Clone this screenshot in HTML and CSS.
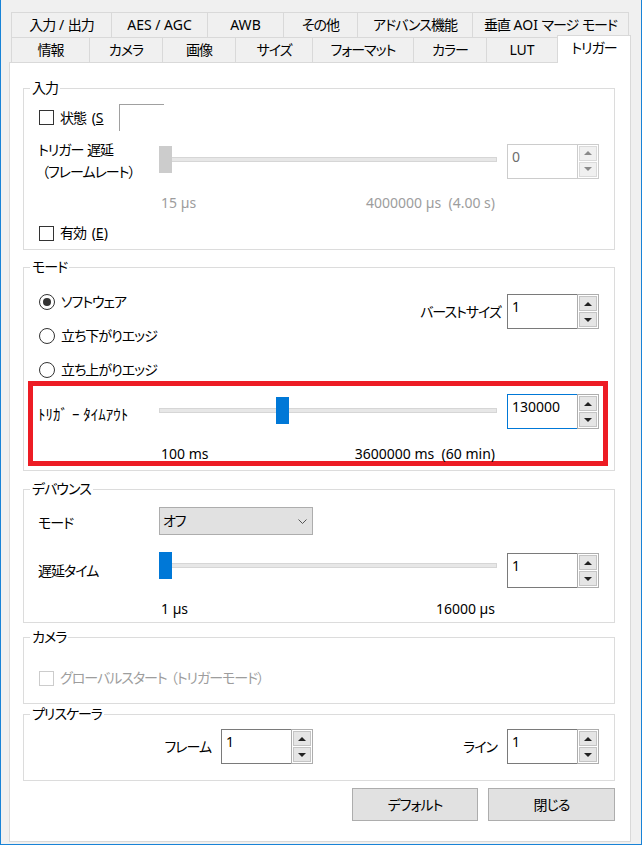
FILE: index.html
```html
<!DOCTYPE html>
<html lang="ja">
<head>
<meta charset="utf-8">
<title>トリガー</title>
<link rel="stylesheet" href="styles.css">
</head>
<body>
<div class="window">
  <div class="tabs">
    <div class="tab-row row1">
      <div class="tab t101">入力<span class="latin"> / </span>出力</div>
      <div class="tab t97 latin">AES / AGC</div>
      <div class="tab t77 latin">AWB</div>
      <div class="tab t75">その他</div>
      <div class="tab t116">アドバンス機能</div>
      <div class="tab t157">垂直<span class="latin"> AOI </span>マージ<span class="latin"> </span>モード</div>
    </div>
    <div class="tab-row row2">
      <div class="tab t79">情報</div>
      <div class="tab t74">カメラ</div>
      <div class="tab t74">画像</div>
      <div class="tab t78">サイズ</div>
      <div class="tab t102">フォーマット</div>
      <div class="tab t74">カラー</div>
      <div class="tab t72 latin">LUT</div>
      <div class="tab t74 active">トリガー</div>
    </div>
  </div>

  <div class="page">
    <!-- 入力 -->
    <div class="group g-input">
      <div class="legend">入力</div>
      <div class="check r-state">
        <span class="cb"></span><span>状態<span class="latin wide"> (<u>S</u></span></span><span class="clip-box"></span>
      </div>
      <div class="slider-row r-delay">
        <div class="slabel">トリガー<span class="latin"> </span>遅延<br><span class="indent">（フレームレート）</span></div>
        <div class="slider s-up"><div class="track"></div><div class="thumb gray" style="left:0px"></div></div>
        <div class="num disabled">
          <div class="num-val">0</div>
          <div class="spin"><span class="sb"><i class="up"></i></span><span class="sb"><i class="dn"></i></span></div>
        </div>
      </div>
      <div class="scale dim r-scale"><span>15 µs</span><span>4000000 µs&nbsp;&nbsp;(4.00 s)</span></div>
      <div class="check r-enable"><span class="cb"></span><span>有効<span class="latin wide"> (<u>E</u>)</span></span></div>
    </div>

    <!-- モード -->
    <div class="group g-mode">
      <div class="legend">モード</div>
      <div class="mode-top">
        <div class="radios">
          <div class="check"><span class="radio on"></span><span>ソフトウェア</span></div>
          <div class="check"><span class="radio"></span><span>立ち下がりエッジ</span></div>
          <div class="check"><span class="radio"></span><span>立ち上がりエッジ</span></div>
        </div>
        <div class="burst">
          <span>バーストサイズ</span>
          <div class="num">
            <div class="num-val">1</div>
            <div class="spin"><span class="sb"><i class="up"></i></span><span class="sb"><i class="dn"></i></span></div>
          </div>
        </div>
      </div>
      <div class="highlight">
        <div class="slider-row r-timeout">
          <div class="slabel half">ﾄﾘｶﾞ ｰ ﾀｲﾑｱｳﾄ</div>
          <div class="slider s-up"><div class="track"></div><div class="thumb" style="left:117px"></div></div>
          <div class="num focus">
            <div class="num-val">130000</div>
            <div class="spin"><span class="sb"><i class="up"></i></span><span class="sb"><i class="dn"></i></span></div>
          </div>
        </div>
        <div class="scale r-scale-red"><span>100 ms</span><span>3600000 ms&nbsp;&nbsp;(60 min)</span></div>
      </div>
    </div>

    <!-- デバウンス -->
    <div class="group g-deb">
      <div class="legend">デバウンス</div>
      <div class="slider-row r-debmode">
        <div class="slabel">モード</div>
        <div class="combo"><span>オフ</span>
          <svg width="9" height="5" viewBox="0 0 9 5"><polyline points="0.5,0.5 4.5,4.5 8.5,0.5" fill="none" stroke="#555" stroke-width="1"/></svg>
        </div>
      </div>
      <div class="slider-row r-debdelay">
        <div class="slabel">遅延タイム</div>
        <div class="slider s-up2"><div class="track"></div><div class="thumb" style="left:0px"></div></div>
        <div class="num">
          <div class="num-val">1</div>
          <div class="spin"><span class="sb"><i class="up"></i></span><span class="sb"><i class="dn"></i></span></div>
        </div>
      </div>
      <div class="scale r-scale"><span>1 µs</span><span>16000 µs</span></div>
    </div>

    <!-- カメラ -->
    <div class="group g-cam">
      <div class="legend">カメラ</div>
      <div class="check r-global dim"><span class="cb dis"></span><span>グローバルスタート<span class="pspace"></span>（トリガーモード）</span></div>
    </div>

    <!-- プリスケーラ -->
    <div class="group g-pre">
      <div class="legend">プリスケーラ</div>
      <div class="pre-row">
        <span class="plabel">フレーム</span>
        <div class="num">
          <div class="num-val">1</div>
          <div class="spin"><span class="sb"><i class="up"></i></span><span class="sb"><i class="dn"></i></span></div>
        </div>
        <span class="plabel">ライン</span>
        <div class="num">
          <div class="num-val">1</div>
          <div class="spin"><span class="sb"><i class="up"></i></span><span class="sb"><i class="dn"></i></span></div>
        </div>
      </div>
    </div>

    <div class="buttons">
      <button class="btn b1">デフォルト</button>
      <button class="btn b2">閉じる</button>
    </div>
  </div>
</div>
</body>
</html>
```

FILE: styles.css
```css
html, body {
  margin: 0;
  padding: 0;
}
body {
  width: 642px;
  height: 845px;
  overflow: hidden;
  font-family: "Noto Sans", "Noto Sans CJK JP", sans-serif;
  font-size: 14px;
  line-height: 20px;
  letter-spacing: -1px;
  color: #000;
  font-feature-settings: "palt";
}
.latin { letter-spacing: 0; word-spacing: 0; }
.latin.wide { word-spacing: 2px; }
.indent { display: inline-block; margin-left: 4px; }
.pspace { display: inline-block; width: 4px; }
.window {
  width: 642px;
  height: 845px;
  box-sizing: border-box;
  border-left: 1px solid #1883d7;
  border-right: 1px solid #1883d7;
  border-bottom: 1px solid #1883d7;
  background: #f0f0f0;
  padding-top: 12px;
}

/* tabs */
.tabs { margin-left: 10px; }
.tab-row { display: flex; height: 25px; }
.row2 { align-items: flex-end; }
.tab {
  box-sizing: border-box;
  height: 25px;
  border: 1px solid #d9d9d9;
  border-bottom: none;
  margin-left: -1px;
  background: #f0f0f0;
  text-align: center;
  line-height: 24px;
  white-space: nowrap;
}
.tab:first-child { margin-left: 0; }
.tab.active {
  height: 28px;
  margin-bottom: -1px;
  position: relative;
  background: #fff;
  line-height: 24px;
}
.t72 { width: 72px; } .t74 { width: 74px; } .t75 { width: 75px; }
.t77 { width: 77px; } .t78 { width: 78px; } .t79 { width: 79px; }
.t97 { width: 97px; } .t101 { width: 101px; } .t102 { width: 102px; }
.t116 { width: 116px; } .t157 { width: 157px; }

/* page */
.page {
  margin-left: 8px;
  width: 622px;
  height: 780px;
  box-sizing: border-box;
  border: 1px solid #d9d9d9;
  background: #fff;
  padding: 25px 15px 0 13px;
}
.group {
  box-sizing: border-box;
  width: 592px;
  border: 1px solid #dcdcdc;
}
.legend {
  width: fit-content;
  margin: -10px 0 0 6px;
  padding: 0 2px;
  background: #fff;
  line-height: 18px;
}
.g-input { height: 162px; }
.g-mode { height: 204px; margin-top: 17px; }
.g-deb { height: 134px; margin-top: 18px; }
.g-cam { height: 67px; margin-top: 14px; }
.g-pre { height: 67px; margin-top: 10px; }

/* check / radio */
.check {
  display: flex;
  align-items: center;
  gap: 6px;
  padding-left: 15px;
  line-height: 20px;
}
.cb {
  width: 15px;
  height: 15px;
  box-sizing: border-box;
  border: 1px solid #333;
  background: #fff;
  flex: none;
}
.cb.dis { border-color: #cccccc; }
.radio {
  width: 16px;
  height: 16px;
  box-sizing: border-box;
  border: 1px solid #333;
  border-radius: 50%;
  display: flex;
  align-items: center;
  justify-content: center;
  flex: none;
}
.radio.on::after {
  content: "";
  width: 8px;
  height: 8px;
  border-radius: 50%;
  background: #333;
}
.dim { color: #9d9d9d; }

.r-state { margin-top: 7px; height: 27px; }
.clip-box {
  align-self: flex-start;
  width: 45px;
  height: 27px;
  box-sizing: border-box;
  border-top: 1px solid #a0a0a0;
  border-left: 1px solid #a0a0a0;
  margin-left: 9px;
}
.r-enable { margin-top: 10px; }

/* slider rows */
.slider-row {
  display: grid;
  grid-template-columns: 121px 338px 102px;
  align-items: center;
  padding-left: 14px;
}
.slider-row .num { justify-self: end; }
.slabel { line-height: 22px; white-space: nowrap; }
.r-delay { margin-top: 8px; }
.slider {
  position: relative;
  height: 27px;
}
.s-up { margin-bottom: 3px; }
.s-up2 { margin-bottom: 10px; }
.track {
  position: absolute;
  left: 0;
  right: 0;
  top: 11px;
  height: 5px;
  box-sizing: border-box;
  background: #e7e7e7;
  border: 1px solid #d6d6d6;
}
.thumb {
  position: absolute;
  top: 0;
  width: 13px;
  height: 27px;
  background: #0078d7;
}
.thumb.gray { background: #cccccc; }

.scale {
  display: flex;
  justify-content: space-between;
  width: 338px;
  box-sizing: border-box;
  margin-left: 135px;
  padding: 0 2px 0 2px;
  line-height: 20px;
  letter-spacing: 0;
}
.r-scale { margin-top: 10px; }

/* numeric up-down */
.num {
  display: flex;
  width: 92px;
  height: 35px;
  box-sizing: border-box;
  letter-spacing: 0;
}
.num-val {
  flex: 1;
  border: 1px solid #7a7a7a;
  border-right: none;
  padding: 1px 4px;
  line-height: 22px;
  background: #fff;
}
.spin {
  width: 22px;
  box-sizing: border-box;
  border: 1px solid #adadad;
  padding: 1px;
  display: flex;
  flex-direction: column;
  gap: 1px;
  background: #fff;
}
.sb {
  flex: 1;
  box-sizing: border-box;
  background: #e5e5e5;
  border: 1px solid #c4c4c4;
  display: flex;
  align-items: center;
  justify-content: center;
}
.up, .dn {
  width: 0;
  height: 0;
  border-left: 4px solid transparent;
  border-right: 4px solid transparent;
}
.up { border-bottom: 4px solid #222; }
.dn { border-top: 4px solid #222; }
.num.focus .num-val { border-color: #0078d7; }
.num.disabled .num-val { border-color: #cccccc; color: #6d6d6d; }
.num.disabled .spin { border-color: #cccccc; }
.num.disabled .sb { background: #f0f0f0; border-color: #dadada; }
.num.disabled .up { border-bottom-color: #8a8a8a; }
.num.disabled .dn { border-top-color: #8a8a8a; }

/* mode */
.mode-top {
  display: flex;
  justify-content: space-between;
  align-items: flex-start;
  margin-top: 16px;
  padding: 0 15px;
}
.radios {
  display: flex;
  flex-direction: column;
  gap: 14px;
}
.radios .check { padding-left: 0; }
.burst {
  display: flex;
  align-items: center;
  gap: 6px;
  margin-top: 2px;
}
.highlight {
  box-sizing: border-box;
  width: 580px;
  height: 85px;
  margin: 1px 0 0 4px;
  border: 5px solid #ed1c24;
  padding: 8px 0 0 0;
}
.highlight .slider-row { padding-left: 5px; }
.highlight .scale { margin-left: 126px; }
.half { padding-top: 4px; font-size: 15px; letter-spacing: 0; }
.r-scale-red { margin-top: 18px; line-height: 14px; }

/* debounce */
.r-debmode { margin-top: 9px; }
.r-debmode .slabel { padding-top: 3px; }
.combo {
  width: 154px;
  height: 28px;
  box-sizing: border-box;
  background: #e1e1e1;
  border: 1px solid #adadad;
  display: flex;
  align-items: center;
  justify-content: space-between;
  padding: 0 5px 0 3px;
}
.r-debdelay { margin-top: 17px; }

/* camera */
.r-global { margin-top: 22px; }

/* prescaler */
.pre-row {
  display: grid;
  grid-template-columns: 173px 92px 174px 92px;
  column-gap: 10px;
  align-items: center;
  margin-top: 6px;
  padding-left: 14px;
}
.plabel { text-align: right; }

/* buttons */
.buttons {
  display: flex;
  justify-content: flex-end;
  gap: 10px;
  width: 592px;
  margin-top: 7px;
}
.btn {
  height: 33px;
  box-sizing: border-box;
  background: #e1e1e1;
  border: 1px solid #adadad;
  font: inherit;
  letter-spacing: -1px;
  color: #000;
  padding: 0;
}
.b1 { width: 126px; }
.b2 { width: 127px; }
```
